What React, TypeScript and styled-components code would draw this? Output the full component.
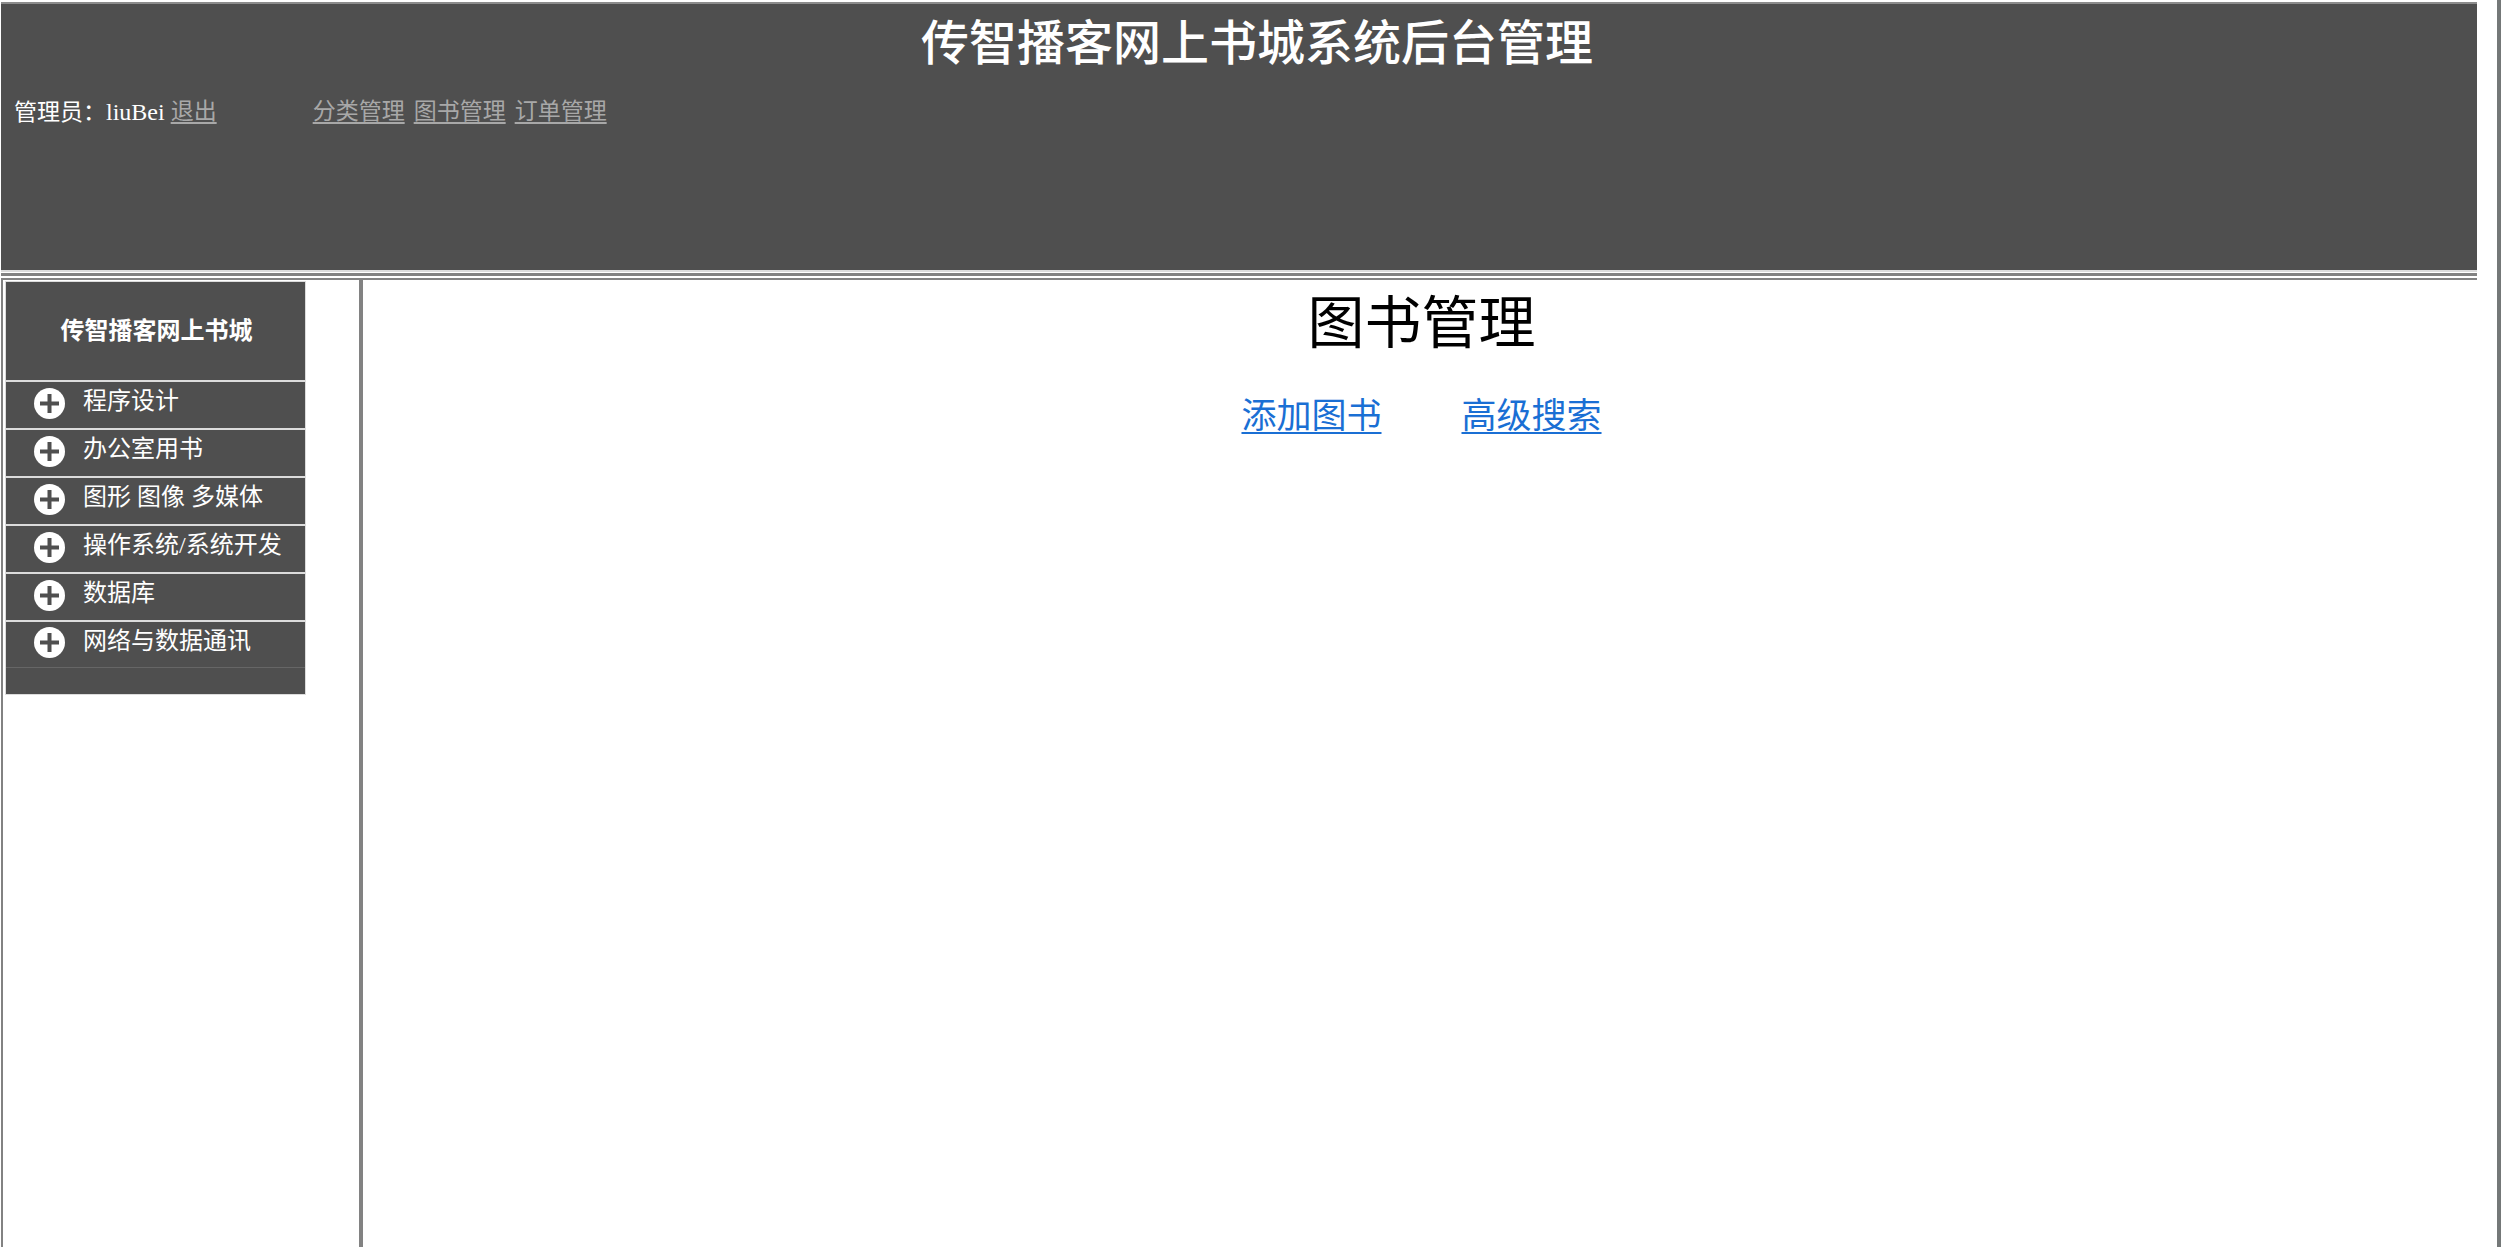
import React from "react";
import styled, { createGlobalStyle } from "styled-components";

const dark = "#4f4f4f";
const line = "#828282";
const pale = "#dcdcdc";

const GlobalStyle = createGlobalStyle`
  *, *::before, *::after { box-sizing: border-box; }
  body {
    margin: 0;
    background: #fff;
    font-family: "Liberation Serif", "Noto Sans CJK SC", serif;
  }
`;

const Page = styled.div`
  display: flex;
  flex-direction: column;
  min-height: 100vh;
  padding: 2px 20px 0 1px;
  border-right: 4px solid #747878;
`;

const Header = styled.header`
  height: 268px;
  border-top: 2px solid #8c8c8c;
  background: ${dark};
  color: #fff;
`;

const SystemTitle = styled.h1`
  margin: 0;
  padding: 8px 0 0 36px;
  font-size: 48px;
  font-weight: 500;
  line-height: 64px;
  text-align: center;
`;

const AdminBar = styled.div`
  display: flex;
  gap: 96px;
  margin-top: 20px;
  padding-left: 13px;
  font-size: 23px;
  line-height: 32px;
`;

const Group = styled.div<{ $gap: number }>`
  display: flex;
  gap: ${(p) => p.$gap}px;
`;

const UserName = styled.span`
  font-size: 24px;
  font-weight: 500;
`;

const TopLink = styled.a`
  color: #a8a8a8;
  text-decoration: underline;
  text-decoration-thickness: 2px;
  text-underline-offset: 3px;
`;

const Divider = styled.div`
  height: 8px;
  border-top: 2px solid ${pale};
  background: linear-gradient(#fff 1px, ${line} 1px, ${line} 4px, #fff 4px);
`;

const Frames = styled.div`
  flex: 1;
  display: flex;
  border-top: 2px solid ${line};
  border-left: 2px solid ${line};
`;

const Side = styled.nav`
  flex: 0 0 356px;
  padding: 1px 0 0 2px;
`;

const Menu = styled.div`
  width: 301px;
  border: 1px solid ${pale};
  background: ${dark};
  color: #fff;
  font-size: 24px;
`;

const MenuTitle = styled.h2`
  margin: 0;
  height: 100px;
  padding-left: 2px;
  border-bottom: 2px solid ${pale};
  font-size: 24px;
  line-height: 98px;
  text-align: center;
`;

const MenuList = styled.ul`
  margin: 0;
  padding: 0 0 26px;
  list-style: none;
`;

const MenuItem = styled.li`
  height: 48px;
  border-bottom: 2px solid ${pale};
  &:last-child {
    height: 46px;
    border-bottom: 1px solid #666;
  }
`;

const MenuButton = styled.button`
  display: flex;
  align-items: center;
  gap: 18px;
  width: 100%;
  height: 100%;
  padding: 0 0 4px 28px;
  border: 0;
  background: none;
  color: inherit;
  font: inherit;
  text-align: left;
  white-space: nowrap;
  cursor: pointer;
`;

const MenuLabel = styled.span`
  padding-bottom: 4px;
  line-height: 32px;
`;

const Main = styled.main`
  flex: 1;
  padding-left: 3px;
  border-left: 4px solid ${line};
  text-align: center;
`;

const PageTitle = styled.h2`
  margin: 0;
  padding-top: 8px;
  font-size: 57px;
  font-weight: 400;
  line-height: 72px;
`;

const Actions = styled.div`
  display: flex;
  justify-content: center;
  gap: 80px;
  margin-top: 33px;
  font-size: 35px;
  line-height: 48px;
`;

const ActionLink = styled.a`
  color: #1a6fd4;
  text-decoration: underline;
  text-decoration-thickness: 2px;
  text-underline-offset: 4px;
`;

const PlusIcon = () => (
  <svg width="31" height="31" viewBox="0 0 31 31" aria-hidden="true">
    <circle cx="15.5" cy="15.5" r="15.5" fill="#fff" />
    <path d="M15.5 6v19M6 15.5h19" stroke={dark} strokeWidth="4" />
  </svg>
);

const categories = [
  "程序设计",
  "办公室用书",
  "图形 图像 多媒体",
  "操作系统/系统开发",
  "数据库",
  "网络与数据通讯",
];

export default function App() {
  return (
    <>
      <GlobalStyle />
      <Page>
        <Header>
          <SystemTitle>传智播客网上书城系统后台管理</SystemTitle>
          <AdminBar>
            <Group $gap={6}>
              <span>
                管理员：<UserName>liuBei</UserName>
              </span>
              <TopLink href="#logout">退出</TopLink>
            </Group>
            <Group $gap={9}>
              <TopLink href="#categories">分类管理</TopLink>
              <TopLink href="#books">图书管理</TopLink>
              <TopLink href="#orders">订单管理</TopLink>
            </Group>
          </AdminBar>
        </Header>
        <Divider />
        <Frames>
          <Side>
            <Menu>
              <MenuTitle>传智播客网上书城</MenuTitle>
              <MenuList>
                {categories.map((name) => (
                  <MenuItem key={name}>
                    <MenuButton type="button">
                      <PlusIcon />
                      <MenuLabel>{name}</MenuLabel>
                    </MenuButton>
                  </MenuItem>
                ))}
              </MenuList>
            </Menu>
          </Side>
          <Main>
            <PageTitle>图书管理</PageTitle>
            <Actions>
              <ActionLink href="#add">添加图书</ActionLink>
              <ActionLink href="#search">高级搜索</ActionLink>
            </Actions>
          </Main>
        </Frames>
      </Page>
    </>
  );
}
